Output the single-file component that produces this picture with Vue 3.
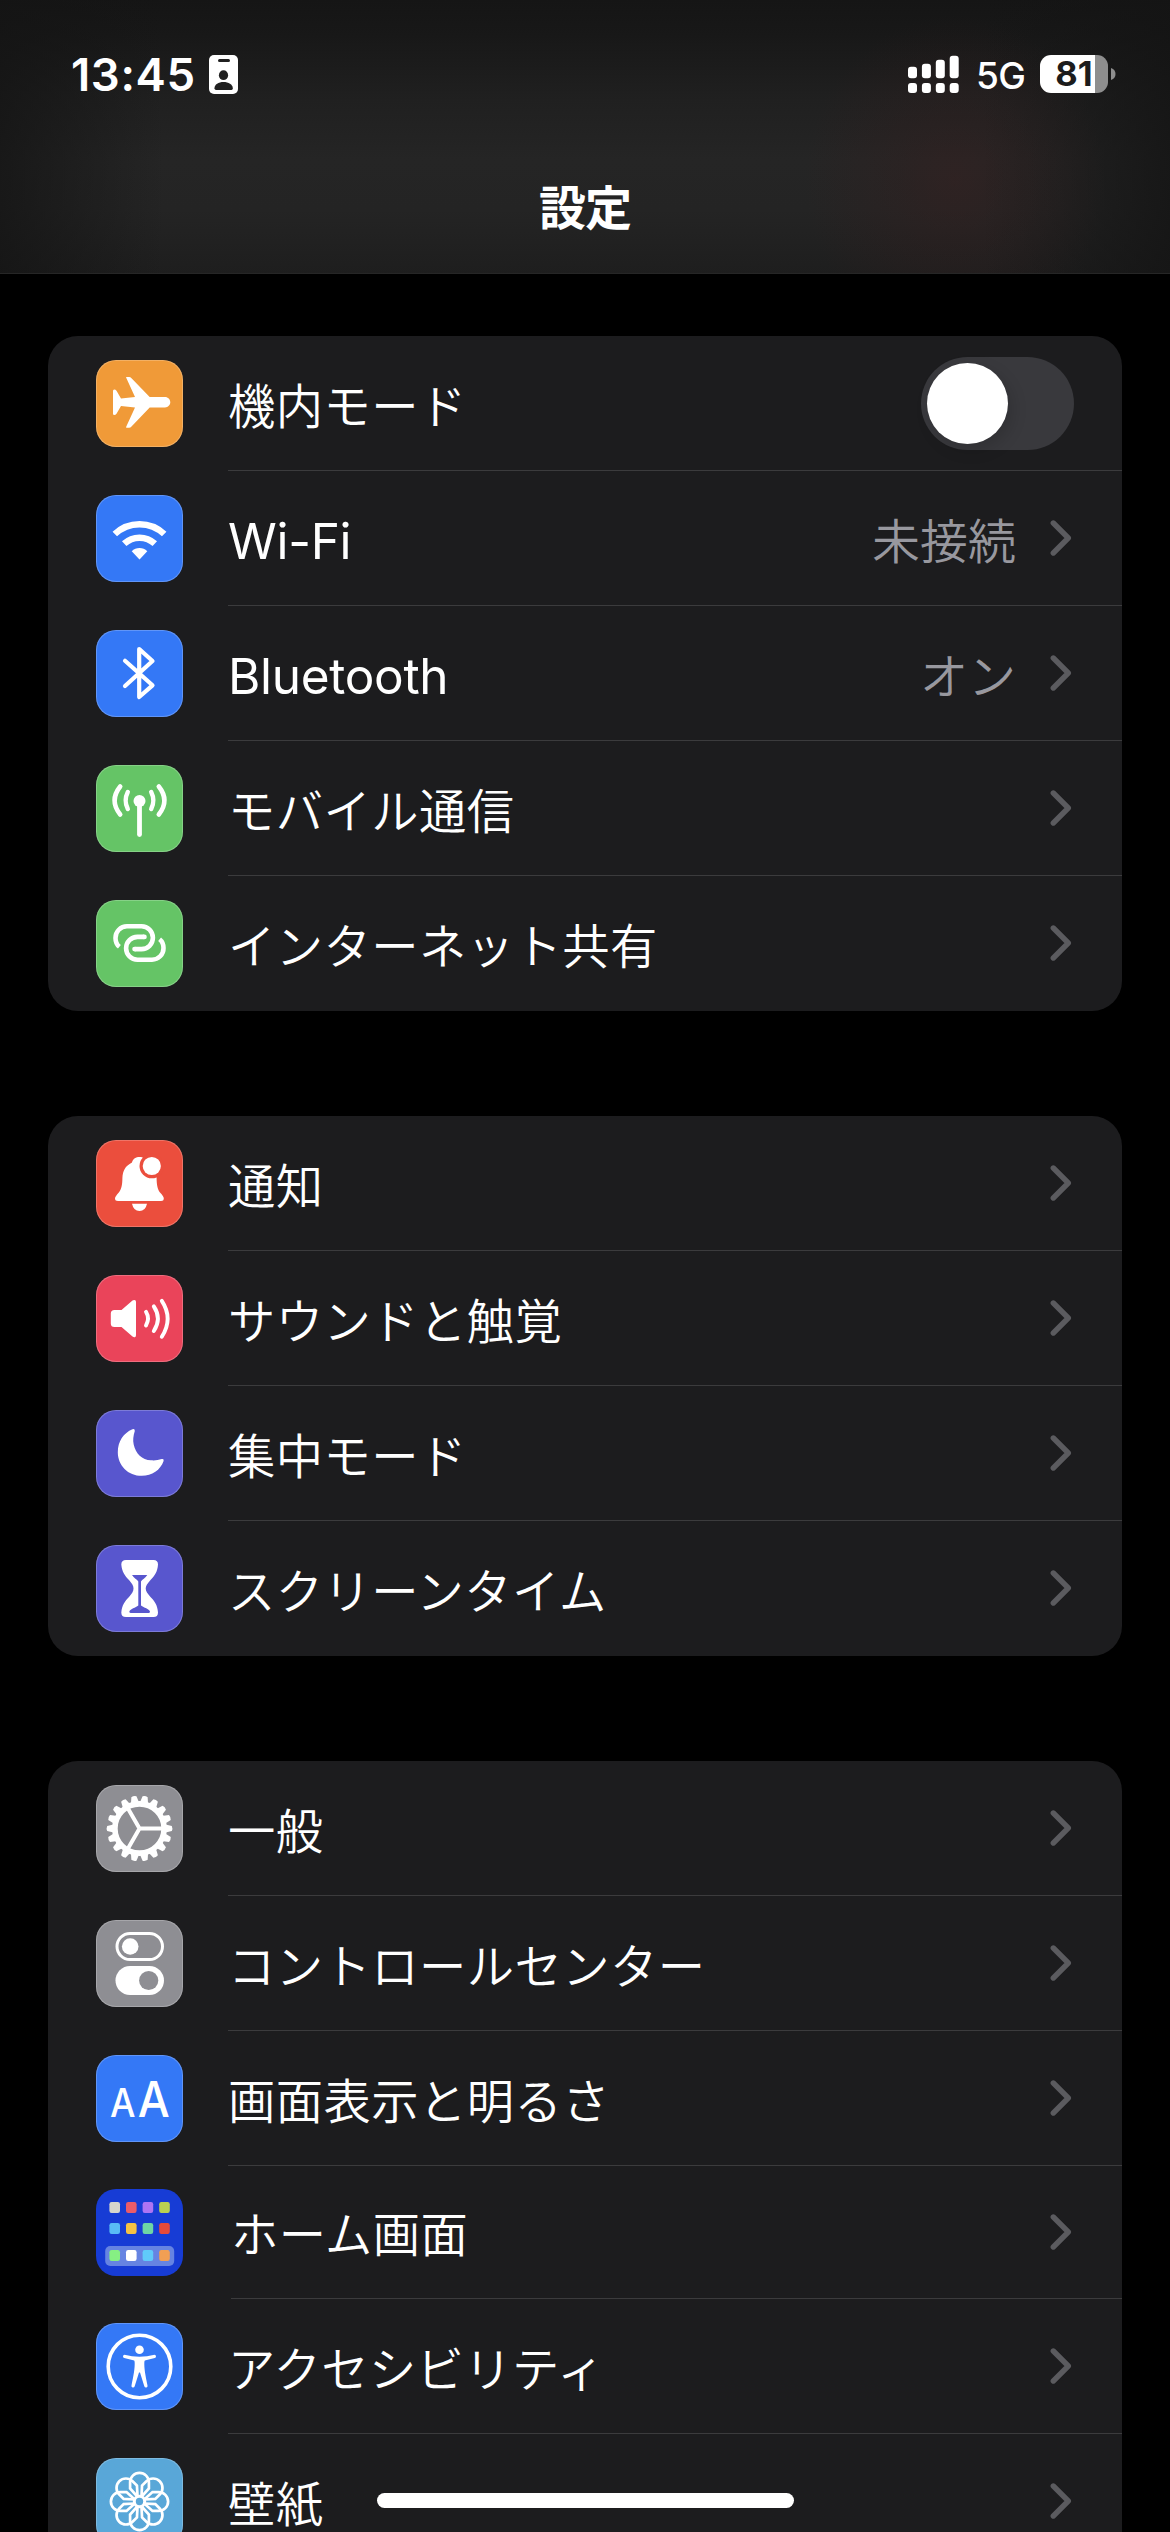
<script setup>
const groups = [
  [
    { icon: 'airplane', color: '#f09a38', label: '機内モード', toggle: true },
    { icon: 'wifi', color: '#3478f6', label: 'Wi-Fi', latin: true, value: '未接続' },
    { icon: 'bluetooth', color: '#3478f6', label: 'Bluetooth', latin: true, value: 'オン' },
    { icon: 'antenna', color: '#65c466', label: 'モバイル通信' },
    { icon: 'hotspot', color: '#65c466', label: 'インターネット共有' },
  ],
  [
    { icon: 'bell', color: '#eb4e3d', label: '通知' },
    { icon: 'speaker', color: '#ea445a', label: 'サウンドと触覚' },
    { icon: 'moon', color: '#5856ce', label: '集中モード' },
    { icon: 'hourglass', color: '#5856ce', label: 'スクリーンタイム' },
  ],
  [
    { icon: 'gear', color: '#8e8e93', label: '一般' },
    { icon: 'switches', color: '#8e8e93', label: 'コントロールセンター' },
    { icon: 'text', color: '#3478f6', label: '画面表示と明るさ' },
    { icon: 'home', color: '#173cd5', label: 'ホーム画面', compact: true },
    { icon: 'access', color: '#3478f6', label: 'アクセシビリティ' },
    { icon: 'flower', color: '#59a7d8', label: '壁紙' },
  ],
]

const teeth = Array.from({ length: 18 }, (_, i) => i * 20)
const petals = Array.from({ length: 8 }, (_, i) => i * 45)
const apps = [
  ['#d7d6cc', '#ea5c69', '#ad74f4', '#b9d151'],
  ['#59bcf6', '#f6c244', '#6ed6a5', '#e64a3a'],
  ['#86f083', '#ffffff', '#60cbfa', '#f19f54'],
]
const appRows = [13, 34, 61]
const signal = [11.5, 14.5, 18.5, 22.5]
</script>

<template>
  <div class="screen">
    <header class="nav">
      <div class="status">
        <span class="time">13:45</span>
        <svg class="badge" width="29" height="39" viewBox="0 0 29 39">
          <rect width="29" height="39" rx="5" fill="#fff" />
          <rect x="9" y="4" width="12" height="3" rx="1.5" fill="#202020" />
          <ellipse cx="14.5" cy="20.2" rx="4.6" ry="4.9" fill="#202020" />
          <path d="M5.5 33.2C5.5 29.5 9.5 27 14.5 27S23.8 29.5 23.8 33.2Q23.8 35 22.500 35H7Q5.500 35 5.500 33.200Z" fill="#202020" />
        </svg>
        <span class="spacer"></span>
        <svg class="signal" width="51" height="38" viewBox="0 0 51 38" fill="#fff">
          <template v-for="(h, i) in signal" :key="i">
            <rect :x="i * 13.9" :y="23.3 - h" width="9" :height="h" rx="3" />
            <rect :x="i * 13.9" y="28" width="9" height="10" rx="3" />
          </template>
        </svg>
        <span class="network">5G</span>
        <div class="battery"><span>81</span></div>
        <svg class="nub" width="5" height="12" viewBox="0 0 5 12"><path d="M0 0Q4.500 1.500 4.500 6T0 12Z" fill="#8e8e8e" /></svg>
      </div>
      <h1>設定</h1>
    </header>

    <main>
      <section v-for="(rows, g) in groups" :key="g" class="card">
        <div v-for="row in rows" :key="row.icon" class="row" :class="{ compact: row.compact }">
          <svg class="icon" :class="{ plain: row.compact }" :style="{ background: row.color }" viewBox="0 0 87 87" fill="none">
            <g v-if="row.icon === 'airplane'" fill="#fff">
              <path d="M69 37C72 37 74.300 39.500 74.300 42.200S72 47.400 69 47.400H53.700L35.500 66.500Q34.500 67.700 33 67.700H30.500Q29.800 67.700 30.200 66.700L39 47.500L25 46L20.500 53.700Q19.600 55 18.200 55Q17 55 17 53.500V31Q17 29.500 18.200 29.500Q19.600 29.500 20.500 30.800L25 38.500L39 37L30.200 17.800Q29.800 17 30.500 17H33Q34.500 17 35.500 18.200L53.700 37Z" />
            </g>
            <g v-else-if="row.icon === 'wifi'">
              <path d="M18.800 39A36 36 0 0 1 68.200 39M28.200 48.700A22.400 22.400 0 0 1 58.800 48.700" stroke="#fff" stroke-width="6.500" />
              <path d="M35.700 56.300Q39 53 43.500 53T51.300 56.300L43.500 64.400Z" fill="#fff" />
            </g>
            <path v-else-if="row.icon === 'bluetooth'" d="M29 30.800L56.500 55.300L43.200 67V19L56.500 31L29 56" stroke="#fff" stroke-width="4.200" stroke-linecap="round" stroke-linejoin="round" />
            <g v-else-if="row.icon === 'antenna'" stroke="#fff" stroke-linecap="round">
              <circle cx="43.500" cy="36" r="6" fill="#fff" stroke="none" />
              <path d="M43.500 38V69.500" stroke-width="4.800" />
              <path d="M31.800 27Q27.500 35.500 31.800 44M55.200 27Q59.500 35.500 55.200 44" stroke-width="4.400" />
              <path d="M24.200 21.500Q13 35.500 24.200 49.500M62.800 21.500Q74 35.500 62.800 49.500" stroke-width="4.600" />
            </g>
            <g v-else-if="row.icon === 'hotspot'" stroke="#fff" stroke-width="4.600">
              <path d="M23.400 46.800C20.500 44.500 19.500 41 19.500 38A11.500 11.500 0 0 1 31 26.300H45.500A11.400 11.400 0 0 1 45.500 49.100H39" />
              <path d="M63.600 39.200C66.500 41.500 67.500 45 67.500 48A11.500 11.500 0 0 1 56 59.700H41.500A11.400 11.400 0 0 1 41.500 36.900H48" />
              <path d="M39 49.100H38.500M48 36.900H48.500" stroke-linecap="round" />
            </g>
            <g v-else-if="row.icon === 'bell'" fill="#fff">
              <path d="M36 22.500C37 18.500 40 17 43.500 17C47 17 50 18.500 51 22.500C58 26 60.200 31 60.600 38C60.700 45 61.500 49 64 52.500C66.500 55 67.800 57 67.800 58.500Q67.800 61 65 61H22Q19 61 19 58.500C19 57 20.500 55 22.800 52.500C25.500 49 26.300 45 26.400 38C26.800 31 29 26 36 22.500Z" />
              <path d="M36 63.800H51Q49.500 71 43.500 71T36 63.800Z" />
              <circle cx="55.800" cy="26" r="12.300" :fill="row.color" />
              <circle cx="55.800" cy="26" r="9.100" />
            </g>
            <g v-else-if="row.icon === 'speaker'">
              <path d="M18.500 35H25.500L36.500 25.500Q38 24.500 39.300 25.300Q40 26 40 27V60Q40 61.500 39.300 62Q38 62.700 36.500 61.500L25.500 52H18.500Q14.800 52 14.800 48.500V38.500Q14.800 35 18.500 35Z" fill="#fff" />
              <path d="M50 36.800Q54 43.500 50 50.500M57.800 31.300Q66 43.500 57.800 56M65.800 25.800Q77.500 43.500 65.800 61.800" stroke="#fff" stroke-width="3.900" stroke-linecap="round" />
            </g>
            <path v-else-if="row.icon === 'moon'" d="M36.500 19.300Q38.800 18.300 38.800 21C37.300 26 36.700 30 37.700 34.500C39.700 43.500 46 50 55 50.300C59 50.600 62 50.200 65.800 49Q68.200 48.500 67.600 51C64.500 60 56 65.800 45.800 65.800C32 65.800 21.800 55.500 21.800 42.200C21.800 31.500 27.500 23 36.500 19.300Z" fill="#fff" />
            <g v-else-if="row.icon === 'hourglass'">
              <path d="M30 15H57.500Q62 15 62 19.500C61.500 27 58.500 31 54.500 35C51.500 38.500 49.700 40.500 49.700 43.500S51.500 48.500 54.500 52C58.500 56 61.500 60 62 67.500Q62 72 57.500 72H30Q25.300 72 25.300 67.500C26 60 29 56 33 52C36 48.500 37.500 46.500 37.500 43.500S36 38.500 33 35C29 31 26 27 25.300 19.500Q25.300 15 30 15Z" fill="#fff" />
              <path d="M36 30H51.300C49.500 33 46 34.500 45 36.500V60.500C48 63 53 63.500 54 66.500Q54 68 52.500 68H35Q33.300 68 33.300 66.500C34.500 63.500 39.500 63 42.300 60.500V36.500C41.200 34.500 37.800 33 36 30Z" :fill="row.color" />
            </g>
            <g v-else-if="row.icon === 'gear'" transform="translate(43.500 43.500)">
              <path v-for="a in teeth" :key="a" :transform="`rotate(${a})`" d="M25 -4.300L32.300 -2.600Q33.500 0 32.300 2.600L25 4.300Z" fill="#fff" />
              <circle r="24.600" stroke="#fff" stroke-width="5.600" />
              <path d="M0 0H23M0 0L-11.500 -19.900M0 0L-11.500 19.900" stroke="#fff" stroke-width="4" />
            </g>
            <g v-else-if="row.icon === 'switches'">
              <rect x="21" y="13.500" width="45.500" height="26" rx="13" stroke="#fff" stroke-width="3" />
              <circle cx="34.200" cy="26.500" r="8.300" fill="#fff" />
              <rect x="19.500" y="46" width="48.500" height="29" rx="14.500" fill="#fff" />
              <circle cx="52.700" cy="60.500" r="9.600" :fill="row.color" />
            </g>
            <g v-else-if="row.icon === 'text'" class="letters" fill="#fff">
              <text x="14" y="61.500" font-size="39" textLength="25.500" lengthAdjust="spacingAndGlyphs">A</text>
              <text x="41.800" y="61.500" font-size="50" textLength="32" lengthAdjust="spacingAndGlyphs">A</text>
            </g>
            <g v-else-if="row.icon === 'home'">
              <rect x="9.200" y="57" width="69" height="20" rx="5" fill="#6684e2" />
              <template v-for="(line, r) in apps" :key="r">
                <rect v-for="(c, i) in line" :key="c" :x="13.400 + i * 16.600" :y="appRows[r]" width="10.600" height="11" rx="2.200" :fill="c" />
              </template>
            </g>
            <g v-else-if="row.icon === 'access'">
              <circle cx="43.500" cy="43.500" r="31.300" stroke="#fff" stroke-width="3.600" />
              <circle cx="43.500" cy="26.700" r="4.300" fill="#fff" />
              <path d="M28.500 31.800Q43.500 35.500 58.500 31.800Q60 31.800 60 33.500Q60 34.600 58.800 35L48.800 37.500Q48.200 38 48.300 41C48.300 48 50.500 57 51.500 62.500Q51.800 64.300 50.300 64.600Q48.800 64.800 48.300 63.200L44 49.500H43L38.700 63.200Q38.200 64.800 36.700 64.600Q35.200 64.300 35.500 62.500C36.500 57 38.700 48 38.700 41Q38.800 38 38.200 37.500L28.200 35Q27 34.600 27 33.500Q27 31.800 28.500 31.800Z" fill="#fff" />
            </g>
            <g v-else transform="translate(43.500 43.500)" stroke="#fff" stroke-width="2.700">
              <path v-for="a in petals" :key="a" :transform="`rotate(${a})`" d="M-2.200 -5L-9.400 -13V-19.200A9.400 9.400 0 0 1 9.400 -19.200V-13L2.200 -5" />
              <circle r="5.200" stroke-width="3" />
            </g>
          </svg>
          <div class="body">
            <span class="label" :class="{ latin: row.latin }">{{ row.label }}</span>
            <span v-if="row.value" class="value">{{ row.value }}</span>
            <span v-if="row.toggle" class="toggle"></span>
            <svg v-else class="chevron" width="22" height="36" viewBox="0 0 22 36" fill="none">
              <path d="M3.300 3L18.300 18L3.300 33" stroke="#5b5b5f" stroke-width="5.400" stroke-linecap="round" stroke-linejoin="round" />
            </svg>
          </div>
        </div>
      </section>
    </main>
    <div class="home-indicator"></div>
  </div>
</template>

<style>
body {
  background: #000;
}
</style>

<style scoped>
.screen {
  position: relative;
  width: 1170px;
  height: 2532px;
  overflow: hidden;
  background: #000;
  color: #fff;
  font-family: Inter, 'Noto Sans CJK JP', sans-serif;
}
.nav {
  box-sizing: border-box;
  height: 274px;
  border-bottom: 1px solid #262626;
  background:
    radial-gradient(ellipse 150px 165px at 955px 180px, rgba(66, 30, 30, 0.34), rgba(58, 30, 30, 0.26) 35%, transparent),
    linear-gradient(90deg, rgba(20, 20, 20, 0.75), transparent 14%, transparent 84%, rgba(20, 20, 20, 0.8)),
    linear-gradient(#151515 0, #181818 36px, #202020 100px, #252525 160px, #242424 210px, #1e1e1e 274px);
}
.status {
  display: flex;
  align-items: center;
  height: 148px;
  padding: 0 54px 0 71px;
}
.time {
  box-sizing: border-box;
  width: 138px;
  padding-top: 2px;
  font-size: 45.5px;
  font-weight: 600;
  letter-spacing: 0.6px;
  line-height: 60px;
}
.spacer {
  flex: 1;
}
.network {
  box-sizing: border-box;
  width: 64px;
  margin-left: 17px;
  font-size: 37px;
  font-weight: 500;
  letter-spacing: -0.5px;
  padding-top: 3px;
}
.battery {
  width: 68px;
  height: 38px;
  border-radius: 11px;
  background: linear-gradient(90deg, #fff 55px, #8e8e8e 55px);
  color: #1c1c1c;
  font-size: 34.5px;
  font-weight: 700;
  line-height: 38px;
  text-align: center;
}
.nub {
  margin-left: 3px;
}
h1 {
  margin: 26px 0 0;
  font-size: 47px;
  font-weight: 700;
  line-height: 68px;
  text-align: center;
  letter-spacing: -1px;
}
main {
  display: flex;
  flex-direction: column;
  gap: 105px;
  padding: 62px 48px 0;
}
.card {
  border-radius: 30px;
  background: #1c1c1e;
}
.row {
  display: flex;
  align-items: center;
  height: 135px;
  padding-left: 48px;
}
.icon {
  flex: none;
  width: 87px;
  height: 87px;
  border-radius: 20px;
  box-shadow: inset 0 0 0 1px rgba(255, 255, 255, 0.22);
}
.icon.plain {
  box-shadow: none;
}
.letters {
  font-family: Inter, sans-serif;
  font-weight: 500;
}
.body {
  display: flex;
  flex: 1;
  align-items: center;
  box-sizing: border-box;
  height: 100%;
  margin-left: 45px;
  padding-right: 48px;
  border-bottom: 1px solid #3b3b3d;
}
.row:last-child .body {
  border-bottom-color: transparent;
}
.row.compact {
  height: 133px;
}
.compact .body {
  margin-left: 48px;
}
.label {
  flex: 1;
  padding-top: 8px;
  font-size: 47.3px;
  font-weight: 350;
  letter-spacing: 0.45px;
  line-height: 60px;
  white-space: nowrap;
}
.compact .label {
  padding-top: 6px;
}
.label.latin {
  padding-top: 6px;
  font-size: 49.5px;
  font-weight: 400;
  letter-spacing: -0.3px;
}
.value {
  margin-right: 34px;
  padding-top: 7px;
  color: #98989f;
  font-size: 48px;
  font-weight: 350;
  line-height: 60px;
}
.chevron {
  flex: none;
  margin-right: 2px;
}
.toggle {
  box-sizing: border-box;
  width: 153px;
  height: 93px;
  padding: 6px;
  border-radius: 47px;
  background: #39393d;
}
.toggle::before {
  display: block;
  width: 81px;
  height: 81px;
  border-radius: 50%;
  background: #fff;
  box-shadow: 4px 6px 16px rgba(0, 0, 0, 0.15);
  content: '';
}
.home-indicator {
  position: absolute;
  bottom: 24px;
  left: 377px;
  width: 417px;
  height: 15px;
  border-radius: 8px;
  background: #fff;
}
</style>
